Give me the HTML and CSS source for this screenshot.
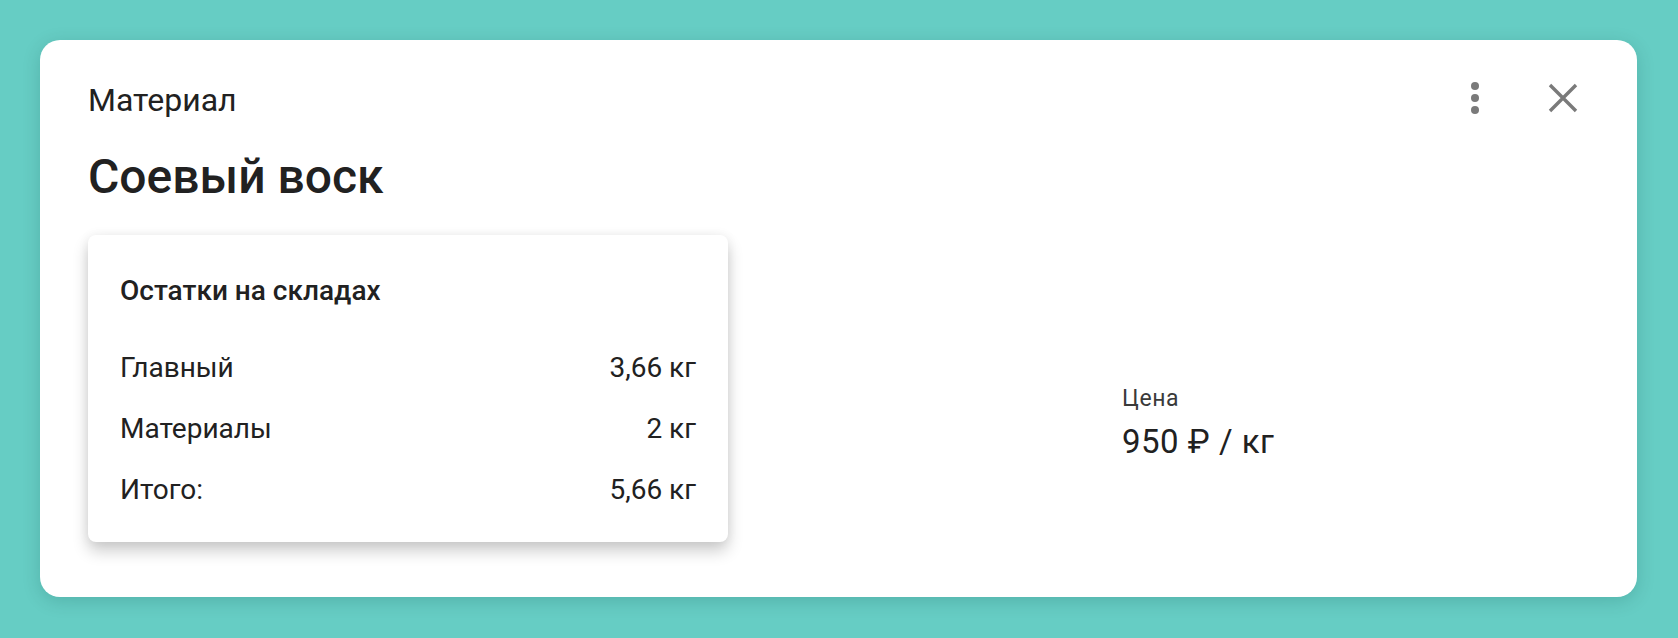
FILE: index.html
```html
<!DOCTYPE html>
<html lang="ru">
<head>
    <meta charset="UTF-8">
    <meta name="viewport" content="width=device-width, initial-scale=1.0">
    <title>Соевый воск</title>
    <link rel="stylesheet" href="styles.css">
</head>
<body>
    <div class="card">
        <div class="card-header">
            <span class="card-type">Материал</span>
            <div class="actions">
                <button class="icon-btn" title="Ещё">
                    <svg width="8" height="32" viewBox="0 0 8 32">
                        <circle cx="4" cy="4" r="4"/>
                        <circle cx="4" cy="16" r="4"/>
                        <circle cx="4" cy="28" r="4"/>
                    </svg>
                </button>
                <button class="icon-btn" title="Закрыть">
                    <svg width="30" height="30" viewBox="0 0 30 30">
                        <path d="M2 2 L28 28 M28 2 L2 28"/>
                    </svg>
                </button>
            </div>
        </div>
        <h1 class="card-title">Соевый воск</h1>

        <div class="card-body">
            <div class="stock">
                <h3 class="stock-title">Остатки на складах</h3>
                <div class="stock-row">
                    <span>Главный</span>
                    <span>3,66 кг</span>
                </div>
                <div class="stock-row">
                    <span>Материалы</span>
                    <span>2 кг</span>
                </div>
                <div class="stock-row">
                    <span>Итого:</span>
                    <span>5,66 кг</span>
                </div>
            </div>

            <div class="price">
                <div class="price-label">Цена</div>
                <div class="price-value">950 ₽ / кг</div>
            </div>
        </div>
    </div>
</body>
</html>
```

FILE: styles.css
```css
body {
    margin: 0;
    padding: 40px 41px 41px 40px;
    background-color: #66cdc4;
    font-family: Roboto, "Liberation Sans", sans-serif;
    color: #212121;
}
.card {
    box-sizing: border-box;
    height: 557px;
    padding: 38px 48px;
    background-color: #fff;
    border-radius: 20px;
    box-shadow: 0 4px 18px rgba(0, 60, 55, 0.18);
}
.card-header {
    display: flex;
    justify-content: space-between;
    align-items: center;
    height: 40px;
}
.card-type {
    padding-top: 3px;
    font-size: 32px;
    line-height: 40px;
}
.actions {
    display: flex;
    gap: 48px;
    margin-right: 6px;
}
.icon-btn {
    display: flex;
    align-items: center;
    justify-content: center;
    width: 40px;
    height: 40px;
    padding: 0;
    border: none;
    background: none;
    cursor: pointer;
}
.icon-btn svg {
    fill: #7a7a7a;
    stroke: #7a7a7a;
    stroke-width: 3.4;
}
.icon-btn circle {
    stroke: none;
}
.card-title {
    margin: 31px 0 0;
    font-size: 48px;
    font-weight: 500;
    line-height: 56px;
}
.card-body {
    display: grid;
    grid-template-columns: 640px 1fr;
    column-gap: 394px;
    margin-top: 30px;
}
.stock {
    padding: 38px 32px 34px;
    background-color: #fff;
    border-radius: 8px;
    box-shadow: 0 9px 16px rgba(0, 0, 0, 0.2), 0 0 12px rgba(0, 0, 0, 0.06);
}
.stock-title {
    margin: 0 0 41px;
    font-size: 28px;
    font-weight: 500;
    line-height: 36px;
}
.stock-row {
    display: flex;
    justify-content: space-between;
    font-size: 28px;
    line-height: 36px;
}
.stock-row + .stock-row {
    margin-top: 25px;
}
.price {
    padding-top: 149px;
}
.price-label {
    font-size: 23px;
    line-height: 30px;
    color: #3a3a3a;
    letter-spacing: 0.6px;
}
.price-value {
    margin-top: 8px;
    font-size: 33px;
    line-height: 40px;
    letter-spacing: 0.5px;
}
```
